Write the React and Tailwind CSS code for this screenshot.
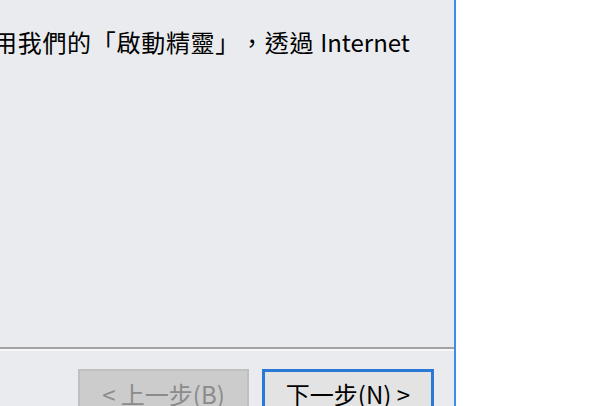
export default function App() {
  return (
    <div className="flex h-[406px] w-[590px] overflow-hidden bg-white font-['Segoe_UI','Noto_Sans_CJK_TC',sans-serif] text-black">
      <div className="flex w-[454px] shrink-0 flex-col overflow-hidden bg-[#eaebee]">
        <div className="flex-1">
          <p className="-ml-[7px] mt-[30px] whitespace-nowrap text-[24px] leading-[24px] [text-spacing-trim:space-all]">
            <span className="tracking-[0.7px]">用我們的「啟動精靈」，透過 </span>
            <span>Internet</span>
          </p>
        </div>

        <div className="border-t-2 border-b-2 border-t-[#a3a3a3] border-b-[#f7f7f8]" />

        <div className="flex h-[55px] shrink-0 items-start justify-end gap-[13px] pr-[20px] pt-[18px]">
          <button
            disabled
            className="h-[46px] w-[171px] shrink-0 border-2 border-[#bfbfbf] bg-[#cccccc] pt-[4px] text-[24px] leading-none text-[#8b8b8b]"
          >
            &lt; 上一步(B)
          </button>
          <button className="h-[46px] w-[172px] shrink-0 border-[3px] border-[#2a79d6] bg-[#e3e3e3] pt-[4px] text-[24px] leading-none text-black">
            下一步(N) &gt;
          </button>
        </div>
      </div>
      <div className="w-[2px] shrink-0 bg-[#3f8ee6]" />
      <div className="flex-1 bg-white" />
    </div>
  )
}
